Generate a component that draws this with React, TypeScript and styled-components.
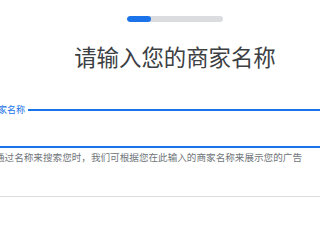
import React from "react";
import styled, { createGlobalStyle } from "styled-components";

const Global = createGlobalStyle`
  html, body {
    margin: 0;
    padding: 0;
    background: #ffffff;
    overflow: hidden;
  }
  body {
    font-family: "Noto Sans CJK SC", "Noto Sans", Roboto, sans-serif;
  }
`;

const Page = styled.div`
  width: 350px;
  height: 200px;
  display: flex;
  flex-direction: column;
  align-items: center;
  overflow: hidden;
`;

const Progress = styled.div`
  margin-top: 16px;
  width: 96px;
  height: 6px;
  border-radius: 3px;
  background: #dadce0;
  overflow: hidden;
  display: flex;
`;

const ProgressFill = styled.div<{ $pct: number }>`
  width: ${(p) => p.$pct}%;
  height: 100%;
  border-radius: 3px;
  background: #1a73e8;
`;

const Title = styled.h1`
  margin: 19px 0 0;
  font-size: 22.4px;
  line-height: 30px;
  font-weight: 400;
  color: #3c4043;
  white-space: nowrap;
`;

const FieldWrap = styled.div`
  align-self: stretch;
  margin: 0 -25px;
  padding-top: 33px;
  display: flex;
  flex-direction: column;
`;

const Outline = styled.fieldset`
  margin: 0;
  padding: 0 9px;
  height: 44px;
  box-sizing: border-box;
  border: 2px solid #1a73e8;
  border-radius: 4px;
`;

const Legend = styled.legend`
  padding: 0 3px;
  font-size: 9px;
  line-height: 12px;
  color: #1a73e8;
  white-space: nowrap;
`;

const Helper = styled.div`
  padding: 3px 0 0 20px;
  font-size: 9.6px;
  line-height: 12px;
  color: #70757a;
  white-space: nowrap;
`;

const Divider = styled.div`
  align-self: stretch;
  margin-top: 33px;
  border-top: 1px solid #dadce0;
`;

export default function App() {
  return (
    <>
      <Global />
      <Page>
        <Progress>
          <ProgressFill $pct={25} />
        </Progress>
        <Title>请输入您的商家名称</Title>
        <FieldWrap>
          <Outline>
            <Legend>商家名称</Legend>
          </Outline>
          <Helper>通过名称来搜索您时，我们可根据您在此输入的商家名称来展示您的广告</Helper>
        </FieldWrap>
        <Divider />
      </Page>
    </>
  );
}
